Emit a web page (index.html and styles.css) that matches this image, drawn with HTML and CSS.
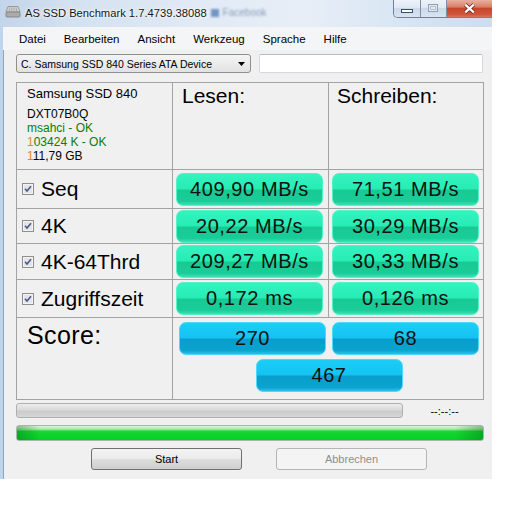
FILE: index.html
```html
<!DOCTYPE html>
<html lang="de">
<head>
<meta charset="utf-8">
<title>AS SSD Benchmark</title>
<link rel="stylesheet" href="styles.css">
</head>
<body>
<div class="window">
  <div class="titlebar">
    <svg class="app-icon" width="16" height="13" viewBox="0 0 16 13">
      <path d="M3 1.5 H13 L15 7 H1 Z" fill="#d2d2d2" stroke="#8c8c8c" stroke-width=".8"/>
      <path d="M5 2.5 L4 6.2 M7 2.5 L6.6 6.2 M9 2.5 L9.2 6.2 M11 2.5 L11.8 6.2" stroke="#9c9c9c" stroke-width=".8"/>
      <rect x="1" y="7" width="14" height="5" rx="1" fill="#ababab" stroke="#7c7c7c" stroke-width=".8"/>
    </svg>
    <span class="title">AS SSD Benchmark 1.7.4739.38088</span>
    <span class="ghost"><i></i>Facebook</span>
    <div class="caption">
      <div class="cbtn min">
        <svg width="13" height="5" viewBox="0 0 13 5"><rect x=".5" y=".5" width="11" height="3" fill="#fff" stroke="#3c4d64"/></svg>
      </div>
      <div class="cbtn max">
        <svg width="11" height="9" viewBox="0 0 11 9"><rect x=".5" y=".5" width="9" height="7" fill="#e3eaf3" stroke="#8fa0b5"/><rect x="2.5" y="2.5" width="5" height="3" fill="none" stroke="#b3c0d0"/></svg>
      </div>
      <div class="cbtn close">
        <svg width="13" height="11" viewBox="0 0 13 11"><path d="M2.2 1.6 L10.8 9.4 M10.8 1.6 L2.2 9.4" stroke="#5e2619" stroke-width="3.8"/><path d="M2.2 1.6 L10.8 9.4 M10.8 1.6 L2.2 9.4" stroke="#fff" stroke-width="2.2"/></svg>
      </div>
    </div>
  </div>

  <div class="client">
    <nav class="menubar">
      <span>Datei</span>
      <span>Bearbeiten</span>
      <span>Ansicht</span>
      <span>Werkzeug</span>
      <span>Sprache</span>
      <span>Hilfe</span>
    </nav>

    <div class="content">
      <div class="toprow">
        <div class="combo">
          <span class="combo-text">C. Samsung SSD 840 Series ATA Device</span>
          <svg class="combo-arrow" width="7" height="4" viewBox="0 0 7 4"><path d="M0 0 H7 L3.5 4 Z" fill="#000"/></svg>
        </div>
        <div class="textbox"></div>
      </div>

      <div class="grid">
        <div class="cell info">
          <div class="model">Samsung SSD 840</div>
          <div class="sm">DXT07B0Q</div>
          <div class="sm ok">msahci - OK</div>
          <div class="sm ok"><span class="fr">1</span>03424 K - OK</div>
          <div class="sm"><span class="fr">1</span>11,79 GB</div>
        </div>
        <div class="cell head read">Lesen:</div>
        <div class="cell head write">Schreiben:</div>

        <div class="cell label">
          <svg class="cb" width="12" height="12" viewBox="0 0 12 12"><rect x=".5" y=".5" width="11" height="11" fill="#f3f3f3" stroke="#8e8f8f"/><rect x="2" y="2" width="8" height="8" fill="#e2e4e7"/><path d="M3 5.8 L5 8 L9 3.2" fill="none" stroke="#44598a" stroke-width="1.5"/></svg>
          <span>Seq</span>
        </div>
        <div class="cell vcell"><div class="val">409,90 MB/s</div></div>
        <div class="cell vcell"><div class="val">71,51 MB/s</div></div>

        <div class="cell label">
          <svg class="cb" width="12" height="12" viewBox="0 0 12 12"><rect x=".5" y=".5" width="11" height="11" fill="#f3f3f3" stroke="#8e8f8f"/><rect x="2" y="2" width="8" height="8" fill="#e2e4e7"/><path d="M3 5.8 L5 8 L9 3.2" fill="none" stroke="#44598a" stroke-width="1.5"/></svg>
          <span>4K</span>
        </div>
        <div class="cell vcell"><div class="val">20,22 MB/s</div></div>
        <div class="cell vcell"><div class="val">30,29 MB/s</div></div>

        <div class="cell label">
          <svg class="cb" width="12" height="12" viewBox="0 0 12 12"><rect x=".5" y=".5" width="11" height="11" fill="#f3f3f3" stroke="#8e8f8f"/><rect x="2" y="2" width="8" height="8" fill="#e2e4e7"/><path d="M3 5.8 L5 8 L9 3.2" fill="none" stroke="#44598a" stroke-width="1.5"/></svg>
          <span>4K-64Thrd</span>
        </div>
        <div class="cell vcell"><div class="val">209,27 MB/s</div></div>
        <div class="cell vcell"><div class="val">30,33 MB/s</div></div>

        <div class="cell label">
          <svg class="cb" width="12" height="12" viewBox="0 0 12 12"><rect x=".5" y=".5" width="11" height="11" fill="#f3f3f3" stroke="#8e8f8f"/><rect x="2" y="2" width="8" height="8" fill="#e2e4e7"/><path d="M3 5.8 L5 8 L9 3.2" fill="none" stroke="#44598a" stroke-width="1.5"/></svg>
          <span>Zugriffszeit</span>
        </div>
        <div class="cell vcell"><div class="val">0,172 ms</div></div>
        <div class="cell vcell"><div class="val">0,126 ms</div></div>

        <div class="cell score-label">Score:</div>
        <div class="cell score-cell">
          <div class="sbox">270</div>
          <div class="sbox">68</div>
          <div class="sbox total">467</div>
        </div>
      </div>

      <div class="progress-row">
        <div class="track"></div>
        <div class="time">--:--:--</div>
      </div>

      <div class="greenbar"></div>

      <div class="buttons">
        <div class="btn">Start</div>
        <div class="btn disabled">Abbrechen</div>
      </div>
    </div>
  </div>
</div>
</body>
</html>
```

FILE: styles.css
```css
* { box-sizing: border-box; }
html, body { margin: 0; padding: 0; background: #fff; }
body { font-family: "Liberation Sans", Arial, sans-serif; color: #000; }

.window {
  width: 492px;
  height: 479px;
  display: flex;
  flex-direction: column;
}

/* ---------- title bar ---------- */
.titlebar {
  height: 27px;
  flex: none;
  display: flex;
  align-items: flex-start;
  padding-left: 5px;
  background: linear-gradient(90deg, #c3d5ea 0%, #d3e1f0 14%, #e1eaf5 40%, #e7eef7 62%, #d9e6f3 80%, #cddded 100%);
}
.app-icon { margin-top: 5px; flex: none; }
.title {
  margin: 6px 0 0 4px;
  font-size: 11.2px;
  line-height: 14px;
  color: #151515;
  white-space: nowrap;
  text-shadow: 0 0 4px #fff, 0 0 2px #fff;
}
.ghost {
  margin: 7px 0 0 4px;
  display: flex;
  align-items: center;
  gap: 4px;
  font-size: 10px;
  color: #6b83a3;
  filter: blur(1.3px);
  opacity: .75;
}
.ghost i { display: block; width: 8px; height: 8px; background: #4f7ab5; }

.caption {
  margin-left: auto;
  display: flex;
  height: 18px;
  border: 1px solid #6e8196;
  border-top: none;
  border-right: none;
  border-radius: 0 0 0 5px;
  overflow: hidden;
  flex: none;
}
.cbtn { display: flex; align-items: center; justify-content: center; }
.cbtn.min, .cbtn.max {
  background: linear-gradient(#eef3f9 0%, #dfe8f2 45%, #cbd9ea 50%, #d8e4f1 100%);
  border-right: 1px solid #7d8fa4;
}
.cbtn.min { width: 27px; padding-top: 5px; }
.cbtn.max { width: 26px; }
.cbtn.close {
  width: 45px;
  background: linear-gradient(#eab0a0 0%, #d8806b 40%, #c8462c 50%, #d0553a 85%, #dc7556 100%);
}

/* ---------- client area ---------- */
.client {
  flex: 1;
  display: flex;
  flex-direction: column;
  background: #f0f0f0;
  border-left: 3px solid #bed5ee;
  box-shadow: inset 1px 0 0 #8fa3bb;
}
.menubar {
  height: 23px;
  flex: none;
  display: flex;
  align-items: center;
  padding: 1px 0 0 7px;
  background: #f4f5f7;
  font-size: 11.5px;
}
.menubar span { padding: 0 9px; }

.content {
  padding: 4px 8px 0 13px;
  display: flex;
  flex-direction: column;
}

.toprow { display: flex; gap: 8px; height: 19px; }
.combo {
  width: 235px;
  height: 19px;
  display: flex;
  align-items: center;
  padding: 0 5px 0 4px;
  border: 1px solid #8e8f8f;
  border-radius: 3px;
  background: linear-gradient(#f4f4f4 0%, #ececec 50%, #e2e2e2 100%);
  font-size: 10.5px;
}
.combo-text { flex: 1; white-space: nowrap; }
.combo-arrow { flex: none; }
.textbox {
  flex: 1;
  height: 19px;
  background: #fff;
  border: 1px solid #d5d9de;
  border-top-color: #b8bcc2;
  border-radius: 2px;
  margin-right: 1px;
}

/* ---------- result grid ---------- */
.grid {
  margin-top: 9px;
  display: grid;
  grid-template-columns: 155px 155px 154px;
  grid-template-rows: 86px 38px 34px 35px 37px 81px;
  gap: 1px;
  background: #a3a3a3;
  border: 1px solid #a3a3a3;
}
.cell { background: #f0f0f0; }

.info { padding: 3px 0 0 10px; }
.model { font-size: 13px; line-height: 15px; margin-bottom: 6px; }
.sm { font-size: 12px; line-height: 14px; }
.ok { color: #0a7d0a; }
.fr { color: #e08a1e; }

.head { font-size: 21px; line-height: 24px; padding-top: 1px; }
.read { padding-left: 9px; }
.write { padding-left: 8px; }

.label {
  display: flex;
  align-items: center;
  padding-left: 5px;
  font-size: 21px;
}
.cb { flex: none; }
.label span { margin-left: 7px; }

.vcell { display: flex; align-items: center; padding-left: 3px; }
.val {
  width: 147px;
  height: 33px;
  border-radius: 7px;
  border: 1px solid #55f2c9;
  background: linear-gradient(#34f3c0 0%, #27ecb4 48%, #18c993 52%, #1acd98 88%, #39e3b4 100%);
  display: flex;
  align-items: center;
  justify-content: center;
  font-size: 20px;
  letter-spacing: .6px;
  color: #101010;
}

.score-label { font-size: 25px; line-height: 29px; padding: 3px 0 0 10px; letter-spacing: .4px; }
.score-cell {
  grid-column: 2 / 4;
  display: grid;
  grid-template-columns: 147px 147px;
  grid-auto-rows: 33px;
  column-gap: 6px;
  row-gap: 4px;
  padding: 4px 0 0 6px;
}
.sbox {
  border-radius: 7px;
  border: 1px solid #4fd8f8;
  background: linear-gradient(#1ccdf8 0%, #14c3f1 48%, #089ecb 52%, #0aa3cf 88%, #2bc0ea 100%);
  display: flex;
  align-items: center;
  justify-content: center;
  font-size: 20px;
  letter-spacing: .6px;
  color: #101010;
}
.sbox.total { grid-column: 1 / 3; width: 147px; justify-self: center; }

/* ---------- bottom ---------- */
.progress-row { margin-top: 3px; display: flex; align-items: center; height: 15px; }
.track {
  width: 387px;
  height: 15px;
  border: 1px solid #b0b0b0;
  border-radius: 3px;
  background: linear-gradient(#ececec 0%, #dadada 45%, #cbcbcb 55%, #d6d6d6 100%);
}
.time { flex: 1; text-align: center; font-size: 11px; padding-left: 2px; }

.greenbar {
  margin-top: 7px;
  height: 16px;
  border: 1px solid #a9b5a9;
  border-radius: 3px;
  background:
    linear-gradient(90deg, rgba(0,90,10,.35) 0%, rgba(0,90,10,0) 5%, rgba(0,90,10,0) 94%, rgba(0,90,10,.35) 100%),
    linear-gradient(#d9f6d6 0%, #a6eca6 22%, #17d632 38%, #04d027 100%);
}

.buttons { margin-top: 7px; display: flex; gap: 34px; padding-left: 75px; }
.btn {
  width: 151px;
  height: 22px;
  display: flex;
  align-items: center;
  justify-content: center;
  border: 1px solid #707070;
  border-radius: 3px;
  background: linear-gradient(#f3f3f3 0%, #ebebeb 50%, #dddddd 52%, #cfcfcf 100%);
  font-size: 11px;
}
.btn.disabled {
  border-color: #b2b6b9;
  background: #f4f4f4;
  color: #8f8f8f;
}
```
